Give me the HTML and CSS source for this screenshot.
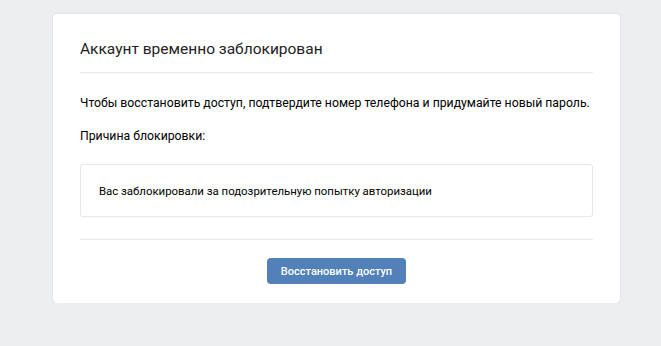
FILE: index.html
```html
<!DOCTYPE html>
<html>
<head>
    <meta charset="UTF-8">
    <meta name="viewport" content="width=device-width, initial-scale=1.0">
    <title>Аккаунт временно заблокирован</title>
    <link rel="stylesheet" href="styles.css">
</head>
<body>
    <div class="card">
        <h2 class="card-title">Аккаунт временно заблокирован</h2>
        <p class="info">Чтобы восстановить доступ, подтвердите номер телефона и придумайте новый пароль.</p>
        <p class="reason-label">Причина блокировки:</p>
        <div class="reason-box">Вас заблокировали за подозрительную попытку авторизации</div>
        <div class="actions">
            <button class="restore-btn">Восстановить доступ</button>
        </div>
    </div>
</body>
</html>
```
FILE: styles.css
```css
body {
    font-family: Roboto, "Open Sans", Arial, sans-serif;
    background-color: #edeef0;
    margin: 0;
    padding: 0;
    color: #000;
}
.card {
    width: 567px;
    box-sizing: border-box;
    margin: 14px 0 0 53px;
    padding: 0 27px 19px;
    background: #fff;
    border-radius: 4px;
    box-shadow: 0 1px 0 0 #d7d8db, 0 0 0 1px #e3e4e8;
}
.card-title {
    margin: 0;
    padding: 24px 0 12px;
    font-size: 15.5px;
    font-weight: normal;
    line-height: 22px;
    color: #222;
    border-bottom: 1px solid #e7e8ec;
}
.info {
    margin: 21px 0 0;
    font-size: 12.25px;
    line-height: 18px;
}
.reason-label {
    margin: 15px 0 0;
    font-size: 12.25px;
    line-height: 18px;
}
.reason-box {
    margin-top: 19px;
    padding: 17px 18px 16px;
    border: 1px solid #e7e8ec;
    border-radius: 3px;
    font-size: 11.4px;
    line-height: 18px;
}
.actions {
    margin-top: 22px;
    padding-top: 18px;
    border-top: 1px solid #e7e8ec;
    text-align: center;
}
.restore-btn {
    width: 139px;
    height: 26px;
    padding: 0;
    background-color: #5181b8;
    color: #fff;
    border: none;
    border-radius: 4px;
    font-family: Roboto, Arial, sans-serif;
    font-size: 11px;
    font-weight: 500;
    cursor: pointer;
}
.restore-btn:hover {
    background-color: #5b88bd;
}
```
